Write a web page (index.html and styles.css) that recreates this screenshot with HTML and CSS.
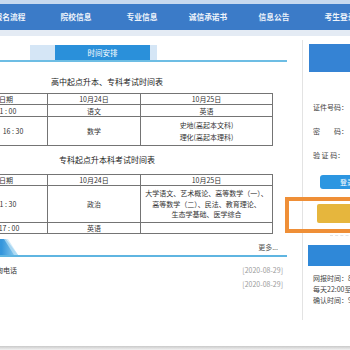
FILE: index.html
```html
<!DOCTYPE html>
<html lang="zh-CN">
<head>
<meta charset="utf-8">
<title>时间安排</title>
<link rel="stylesheet" href="styles.css">
</head>
<body>
<div class="topstrip"></div>
<nav class="nav">
  <a class="nav-item">首页</a>
  <a class="nav-item">报名流程</a>
  <a class="nav-item">院校信息</a>
  <a class="nav-item">专业信息</a>
  <a class="nav-item">诚信承诺书</a>
  <a class="nav-item">信息公告</a>
  <a class="nav-item">考生登录</a>
</nav>
<div class="subbar"></div>
<div class="main">
  <div class="left">
    <div class="tabrow">
      <div class="tabbar"><span class="tab">时间安排</span></div>
    </div>
    <div class="tbl-title t1">高中起点升本、专科考试时间表</div>
    <table class="tbl">
      <colgroup><col class="c1"><col class="c2"><col class="c3"></colgroup>
      <tr class="h11"><td>日期</td><td>10月24日</td><td>10月25日</td></tr>
      <tr class="h12"><td>11 : 00</td><td>语文</td><td>英语</td></tr>
      <tr class="h29"><td class="shift">16 : 30</td><td>数学</td><td><div>史地(高起本文科)</div><div>理化(高起本理科)</div></td></tr>
    </table>
    <div class="tbl-title t2">专科起点升本科考试时间表</div>
    <table class="tbl">
      <colgroup><col class="c1"><col class="c2"><col class="c3"></colgroup>
      <tr class="h11"><td>日期</td><td>10月24日</td><td>10月25日</td></tr>
      <tr class="h37"><td>11 : 30</td><td>政治</td><td><div>大学语文、艺术概论、高等数学（一）、</div><div>高等数学（二）、民法、教育理论、</div><div>生态学基础、医学综合</div></td></tr>
      <tr class="h11"><td class="shift-s">17 : 00</td><td>英语</td><td></td></tr>
    </table>
    <div class="sechead">
      <svg class="corner" width="54" height="16" viewBox="0 0 54 16">
        <defs>
          <linearGradient id="cg" x1="0" y1="0" x2="1" y2="0">
            <stop offset="0" stop-color="#2a86d4"/>
            <stop offset="0.7" stop-color="#3596dc"/>
            <stop offset="1" stop-color="#9ad3f0"/>
          </linearGradient>
        </defs>
        <polygon points="0,0 42,0 54,16 0,16" fill="url(#cg)"/>
        <polygon points="40,0 44,0 54,16 50,16" fill="#bfe3f6" opacity="0.7"/>
      </svg>
      <span class="more">更多...</span>
    </div>
    <ul class="news">
      <li class="news-row"><span class="news-text">报名咨询电话</span><span class="news-date">[2020-08-29]</span></li>
      <li class="news-row"><span class="news-text"></span><span class="news-date">[2020-08-29]</span></li>
    </ul>
  </div>
  <aside class="right">
    <div class="panel-head"></div>
    <div class="field">证件号码：</div>
    <div class="field">密　　码：</div>
    <div class="field">验 证 码：</div>
    <div class="btn-login">登录</div>
    <div class="btn-yellow"></div>
    <div class="dash"></div>
    <div class="panel-head2"></div>
    <div class="info">
      <div>网报时间：8月31日</div>
      <div>每天22:00至次日</div>
      <div>确认时间：9月</div>
    </div>
  </aside>
</div>
<div class="foot"></div>
<div class="mark"></div>
</body>
</html>
```
FILE: styles.css
```css
html, body {
  margin: 0;
  padding: 0;
}
body {
  width: 350px;
  height: 350px;
  overflow: hidden;
  position: relative;
  background: #ffffff;
  font-family: "Noto Sans CJK SC", "Noto Sans", sans-serif;
  color: #333333;
}
.topstrip {
  height: 4px;
  background: #c6d9ef;
}
.nav {
  height: 26px;
  background: #3b7bc8;
  display: flex;
  align-items: center;
  margin-left: -89px;
  width: 520px;
}
.nav-item {
  flex: 0 0 66px;
  text-align: center;
  color: #eef4fb;
  font-size: 7.7px;
  font-weight: bold;
  line-height: 10px;
}
.subbar {
  height: 6px;
  background: #e4ebf4;
}
.main {
  display: flex;
  height: 310px;
  width: 500px;
}
.left {
  margin-left: -36px;
  width: 323px;
  flex: 0 0 323px;
}
.tabrow {
  margin-top: 9px;
  height: 15px;
  border-bottom: 2px solid #6dbde4;
}
.tabbar {
  margin-left: 66px;
  width: 127px;
  height: 15px;
  background: #d5e6f6;
  display: flex;
}
.tab {
  margin-left: 25px;
  width: 95px;
  height: 15px;
  background: #2a90da;
  color: #ffffff;
  font-size: 7.5px;
  line-height: 15px;
  text-align: center;
}
.tbl-title {
  width: 286px;
  text-align: center;
  font-size: 8px;
  line-height: 10px;
  color: #222222;
}
.t1 {
  margin-top: 15px;
  margin-bottom: 6px;
}
.t2 {
  margin-top: 9px;
  margin-bottom: 9px;
}
.tbl {
  border-collapse: collapse;
  table-layout: fixed;
  width: 308px;
  font-size: 7px;
  line-height: 10px;
  color: #333333;
}
.c1 { width: 83px; }
.c2 { width: 93px; }
.c3 { width: 132px; }
.tbl td {
  border: 1px solid #747474;
  padding: 0;
  text-align: center;
  vertical-align: middle;
  white-space: nowrap;
  overflow: hidden;
}
.tbl td.shift {
  padding-left: 14px;
}
.tbl td.shift-s {
  padding-left: 6px;
}
.h11 { height: 11px; }
.h12 { height: 12px; }
.h29 { height: 29px; }
.h29 td div { line-height: 12px; }
.h37 { height: 37px; }
.h37 td div { line-height: 10.5px; }
.sechead {
  margin-top: 5px;
  height: 16px;
  border-bottom: 2px solid #5fb5e1;
  display: flex;
  align-items: center;
  justify-content: space-between;
}
.corner {
  display: block;
  align-self: flex-end;
}
.more {
  font-size: 7px;
  color: #555555;
  padding-right: 9px;
  line-height: 10px;
}
.news {
  list-style: none;
  margin: 6px 0 0 0;
  padding: 0;
}
.news-row {
  height: 14px;
  display: flex;
  align-items: center;
  justify-content: space-between;
  font-size: 7px;
  padding-left: 11px;
  padding-right: 4px;
}
.news-text {
  color: #333333;
}
.news-date {
  color: #9a9a9a;
}
.right {
  margin-left: 15px;
  margin-top: 4px;
  height: 280px;
  border-left: 1px solid #e3e3e3;
  flex: 0 0 150px;
  font-size: 7px;
  color: #444444;
}
.panel-head {
  margin-top: 4px;
  margin-left: 6px;
  height: 28px;
  width: 140px;
  background: #3583d4;
}
.field {
  height: 24px;
  line-height: 24px;
  padding-left: 10px;
}
.panel-head + .field {
  margin-top: 23px;
}
.btn-login {
  margin-top: 8px;
  margin-left: 17px;
  width: 54px;
  height: 14px;
  line-height: 14px;
  border-radius: 3px;
  background: #2c96e1;
  color: #ffffff;
  text-align: center;
}
.btn-yellow {
  margin-top: 15px;
  margin-left: 14px;
  width: 80px;
  height: 19px;
  border-radius: 2px;
  background: #e6b63d;
}
.dash {
  margin-top: 12px;
  margin-left: 27px;
  width: 60px;
  border-top: 1px dashed #e2e2e2;
}
.panel-head2 {
  margin-top: 9px;
  margin-left: 5px;
  width: 140px;
  height: 21px;
  background: #2f88d8;
}
.info {
  margin-top: 7px;
  padding-left: 10px;
  line-height: 11px;
  white-space: nowrap;
}
.foot {
  height: 4px;
  background: linear-gradient(#c9c9c9, #f2f2f2);
}
.mark {
  position: absolute;
  left: 285px;
  top: 197px;
  width: 100px;
  height: 36px;
  box-sizing: border-box;
  border: 4px solid #ef8f37;
}
```
